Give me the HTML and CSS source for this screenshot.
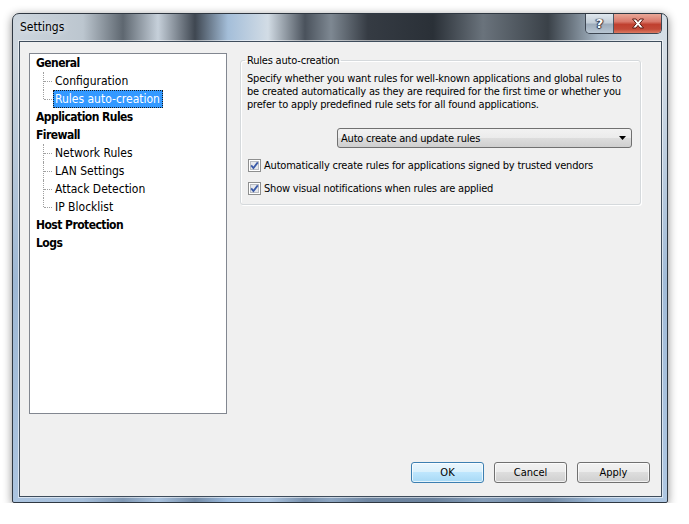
FILE: index.html
```html
<!DOCTYPE html>
<html lang="en">
<head>
  <meta charset="UTF-8">
  <title>Settings</title>
  <link rel="stylesheet" href="styles.css">
</head>
<body>
  <div class="window">
    <div class="titlebar">
      <span class="title">Settings</span>
      <div class="caption-buttons">
        <span class="cap help">?</span>
        <span class="cap close">
          <svg width="14" height="11" viewBox="0 0 14 11">
            <path d="M1.5 1 L5 1 L7 3.6 L9 1 L12.5 1 L8.8 5.5 L12.5 10 L9 10 L7 7.4 L5 10 L1.5 10 L5.2 5.5 Z" fill="#fff" stroke="#5a1810" stroke-width="1" stroke-linejoin="round"/>
          </svg>
        </span>
      </div>
    </div>

    <div class="client">
      <div class="main">
        <div class="tree">
          <div class="root">General</div>
          <ul class="children">
            <li><span>Configuration</span></li>
            <li class="last"><span class="sel">Rules auto-creation</span></li>
          </ul>
          <div class="root">Application Rules</div>
          <div class="root">Firewall</div>
          <ul class="children">
            <li><span>Network Rules</span></li>
            <li><span>LAN Settings</span></li>
            <li><span>Attack Detection</span></li>
            <li class="last"><span>IP Blocklist</span></li>
          </ul>
          <div class="root">Host Protection</div>
          <div class="root">Logs</div>
        </div>

        <fieldset class="group">
          <legend>Rules auto-creation</legend>
          <p class="desc">Specify whether you want rules for well-known applications and global rules to<br>be created automatically as they are required for the first time or whether you<br>prefer to apply predefined rule sets for all found applications.</p>
          <div class="combo">
            <span>Auto create and update rules</span>
            <svg width="7" height="4" viewBox="0 0 7 4"><path d="M0 0 L7 0 L3.5 4 Z" fill="#000"/></svg>
          </div>
          <label class="check first">
            <span class="box">
              <svg width="13" height="13" viewBox="0 0 13 13">
                <rect x="0.5" y="0.5" width="12" height="12" fill="#fff" stroke="#8e8f8f"/>
                <rect x="2.5" y="2.5" width="8" height="8" fill="#e6e8ec" stroke="#b9bcc2"/>
                <path d="M3.2 6.4 L5.4 9 L9.8 3.4" fill="none" stroke="#3a5aa8" stroke-width="1.8"/>
              </svg>
            </span>
            Automatically create rules for applications signed by trusted vendors
          </label>
          <label class="check">
            <span class="box">
              <svg width="13" height="13" viewBox="0 0 13 13">
                <rect x="0.5" y="0.5" width="12" height="12" fill="#fff" stroke="#8e8f8f"/>
                <rect x="2.5" y="2.5" width="8" height="8" fill="#e6e8ec" stroke="#b9bcc2"/>
                <path d="M3.2 6.4 L5.4 9 L9.8 3.4" fill="none" stroke="#3a5aa8" stroke-width="1.8"/>
              </svg>
            </span>
            Show visual notifications when rules are applied
          </label>
        </fieldset>
      </div>

      <div class="buttons">
        <button class="btn default">OK</button>
        <button class="btn">Cancel</button>
        <button class="btn">Apply</button>
      </div>
    </div>
  </div>
</body>
</html>
```

FILE: styles.css
```css
body {
  margin: 0;
  background: #fff;
  font-family: "DejaVu Sans Condensed", "DejaVu Sans", sans-serif;
  font-size: 11px;
  letter-spacing: -0.2px;
  color: #000;
}
.window {
  box-sizing: border-box;
  width: 656px;
  height: 490px;
  margin: 13px 0 0 12px;
  border: 1px solid #2f3842;
  border-radius: 7px 7px 2px 2px;
  background:
    linear-gradient(180deg, rgba(255, 255, 255, 0) 0, rgba(255, 255, 255, 0) 40px, rgba(120, 160, 205, 0.55) 55%, rgba(150, 185, 225, 0.6) 100%),
    linear-gradient(90deg, #cdd6de 0, #bcc6cf 70px, #5e6770 110px, #c6d0da 145px, #3f4751 182px, #a4bed9 215px, #d2dce5 255px, #4a525c 292px, #7e8892 318px, #353b43 355px, #2a3037 420px, #6a737c 470px, #3a4148 535px, #a6b6c5 585px, #d4dde5 640px);
  box-shadow: 0 2px 10px rgba(0, 0, 0, 0.45);
  display: flex;
  flex-direction: column;
}
.titlebar {
  height: 27px;
  display: flex;
  justify-content: space-between;
  align-items: flex-start;
  padding-left: 7px;
  padding-right: 5px;
}
.title {
  font-size: 12px;
  line-height: 14px;
  letter-spacing: 0;
  margin-top: 6px;
  color: #000;
  text-shadow: 0 0 6px rgba(255, 255, 255, 0.9);
}
.caption-buttons {
  display: flex;
  height: 19px;
  border: 1px solid #3d4652;
  border-top: none;
  border-radius: 0 0 5px 5px;
  overflow: hidden;
}
.cap {
  display: flex;
  align-items: center;
  justify-content: center;
  height: 19px;
}
.help {
  width: 27px;
  border-right: 1px solid #4c5662;
  background: linear-gradient(#dfe7ee 0, #c3ced8 45%, #9eacbb 55%, #b8c6d3 100%);
  color: #fff;
  font-family: "DejaVu Sans", sans-serif;
  font-weight: bold;
  font-size: 13px;
  letter-spacing: 0;
  text-shadow: 0 0 1px #223, 1px 0 1px #334, -1px 0 1px #334, 0 1px 1px #334;
}
.close {
  width: 47px;
  background: linear-gradient(#e9a898 0, #d9786a 40%, #c0402f 55%, #c34a38 80%, #dc7a62 100%);
}
.client {
  box-sizing: border-box;
  flex: 1;
  margin: 0 5px 5px 6px;
  border: 1px solid #3f4d5c;
  box-shadow: 0 0 0 1px rgba(255, 255, 255, 0.55);
  background: #f0f0f0;
  padding: 11px 11px 13px 9px;
  display: flex;
  flex-direction: column;
}
.main {
  display: flex;
  align-items: flex-start;
}
.tree {
  box-sizing: border-box;
  width: 198px;
  height: 361px;
  background: #fff;
  border: 1px solid #828790;
  padding-left: 6px;
  font-size: 12px;
  letter-spacing: 0;
}
.root {
  height: 18px;
  line-height: 18px;
  font-weight: bold;
  letter-spacing: -0.55px;
}
.children {
  list-style: none;
  margin: 0 0 0 7px;
  padding: 0;
}
.children li {
  position: relative;
  height: 18px;
  line-height: 18px;
  padding-left: 10px;
}
.children li::before {
  content: "";
  position: absolute;
  left: 0;
  top: 0;
  bottom: 0;
  border-left: 1px dotted #a0a0a0;
}
.children li.last::before {
  bottom: 9px;
}
.children li::after {
  content: "";
  position: absolute;
  left: 1px;
  top: 9px;
  width: 8px;
  border-top: 1px dotted #a0a0a0;
}
.children li span {
  display: inline-block;
  padding: 0 2px 0 1px;
  border: 1px solid transparent;
  line-height: 16px;
  vertical-align: top;
}
.children li span.sel {
  background: #3399ff;
  color: #fff;
  border: 1px dotted #1a1a1a;
}
.group {
  box-sizing: border-box;
  width: 401px;
  margin: 1px 0 0 13px;
  padding: 5px 6px 9px 6px;
  border: 1px solid #d5d9dc;
  border-radius: 3px;
  box-shadow: inset 1px 1px 0 #fff, 1px 1px 0 #fff;
  min-inline-size: 0;
  display: flex;
  flex-direction: column;
}
.group legend {
  padding: 0 2px;
  margin-left: -2px;
  line-height: 13px;
}
.desc {
  margin: 0;
  line-height: 13px;
  white-space: nowrap;
}
.combo {
  box-sizing: border-box;
  align-self: flex-end;
  width: 295px;
  height: 20px;
  margin: 17px 2px 0 0;
  padding: 0 5px 0 3px;
  border: 1px solid #707070;
  border-radius: 3px;
  background: linear-gradient(#f2f2f2 0, #ebebeb 50%, #dddddd 50%, #cfcfcf 100%);
  display: flex;
  align-items: center;
  justify-content: space-between;
}
.check {
  display: flex;
  align-items: center;
  height: 13px;
  line-height: 13px;
  margin-top: 10px;
  margin-left: 1px;
}
.check.first {
  margin-top: 11px;
}
.box {
  display: flex;
  width: 13px;
  height: 13px;
  margin-right: 3px;
}
.buttons {
  margin-top: auto;
  display: flex;
  justify-content: flex-end;
  gap: 10px;
}
.btn {
  box-sizing: border-box;
  width: 73px;
  height: 21px;
  padding: 0;
  font-family: inherit;
  font-size: 11px;
  letter-spacing: 0;
  color: #000;
  border: 1px solid #707070;
  border-radius: 3px;
  background: linear-gradient(#f2f2f2 0, #ebebeb 50%, #dddddd 50%, #cfcfcf 100%);
  box-shadow: inset 0 0 0 1px rgba(255, 255, 255, 0.7);
}
.btn.default {
  border-color: #3c7fb1;
  background: linear-gradient(#eaf6fd 0, #d9f0fc 50%, #bee6fd 50%, #a7d9f5 100%);
}
```
